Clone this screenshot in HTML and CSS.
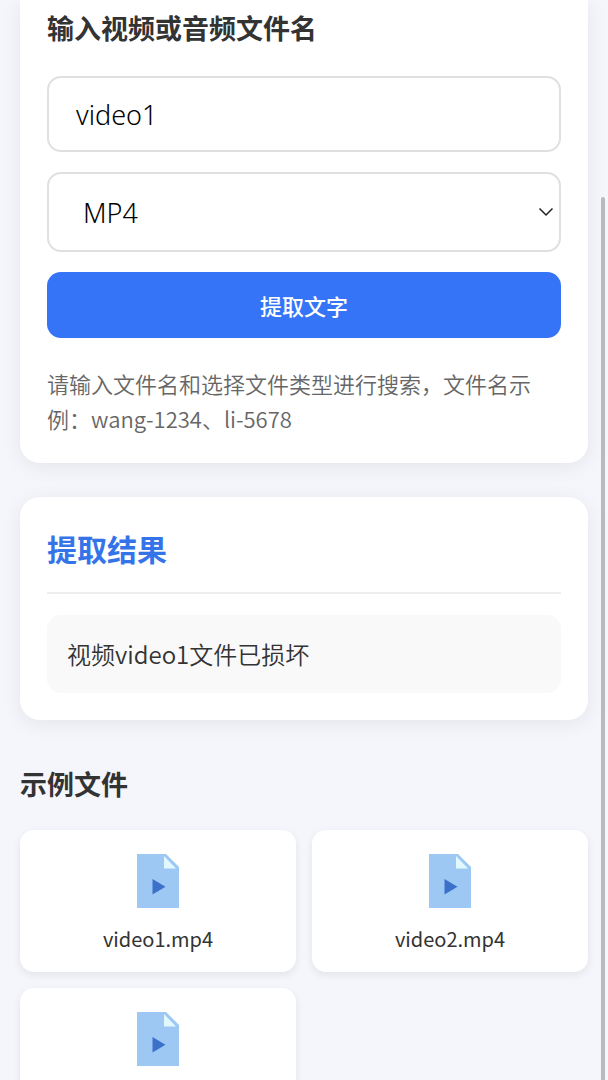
FILE: index.html
```html
<!DOCTYPE html>
<html lang="zh-CN">

<head>
    <meta charset="UTF-8">
    <meta name="viewport" content="width=device-width, initial-scale=1.0">
    <title>视频音频文字提取</title>
    <link rel="stylesheet" href="styles.css">
</head>

<body>
    <!-- 文件图标 -->
    <svg class="sprite" aria-hidden="true">
        <symbol id="icon-video" viewBox="0 0 42 54">
            <path d="M0 0h29l13 13v41H0z" fill="#9dc8f4" />
            <path d="M27 2v12.500h12z" fill="#e1f8fe" />
            <path d="M15.500 25v15.500L28.500 32.700z" fill="#3c71c9" />
        </symbol>
    </svg>

    <main class="container">
        <!-- 搜索区域 -->
        <form class="card search">
            <label class="search-title" for="filename">输入视频或音频文件名</label>
            <input class="field" type="text" id="filename" value="video1">
            <div class="select-box">
                <select class="field" id="filetype" aria-label="文件类型">
                    <option>MP4</option>
                    <option>MP3</option>
                </select>
                <svg class="select-arrow" viewBox="0 0 16 10" aria-hidden="true">
                    <path d="M1.500 1.500L8 8l6.500-6.500" fill="none" stroke="#222" stroke-width="1.500" />
                </svg>
            </div>
            <button class="btn" type="button">提取文字</button>
            <p class="hint">请输入文件名和选择文件类型进行搜索，文件名示例：wang-1234、li-5678</p>
        </form>

        <!-- 结果区域 -->
        <section class="card result">
            <h2 class="result-title">提取结果</h2>
            <div class="result-text">视频video1文件已损坏</div>
        </section>

        <!-- 示例文件 -->
        <section class="examples">
            <h3 class="examples-title">示例文件</h3>
            <ul class="file-list">
                <li class="file">
                    <svg class="file-icon" aria-hidden="true"><use href="#icon-video" /></svg>
                    <span>video1.mp4</span>
                </li>
                <li class="file">
                    <svg class="file-icon" aria-hidden="true"><use href="#icon-video" /></svg>
                    <span>video2.mp4</span>
                </li>
                <li class="file">
                    <svg class="file-icon" aria-hidden="true"><use href="#icon-video" /></svg>
                </li>
            </ul>
        </section>
    </main>
    <div class="scroll-thumb"></div>
</body>

</html>
```

FILE: styles.css
```css
* {
    margin: 0;
    padding: 0;
    box-sizing: border-box;
}

body {
    height: 100vh;
    overflow: hidden;
    background-color: #f4f6fb;
    color: #333;
    font-family: "Noto Sans CJK SC", sans-serif;
}

ul {
    list-style: none;
}

.sprite {
    position: absolute;
    width: 0;
    height: 0;
}

.container {
    padding: 0 20px;
}

.card {
    padding: 27px;
    background-color: #fff;
    border-radius: 20px;
    box-shadow: 0 4px 20px rgba(0, 0, 0, 0.07);
}

/* 搜索区域 */
.search {
    display: flex;
    flex-direction: column;
    gap: 20px;
    padding-top: 8px;
    border-radius: 0 0 20px 20px;
}

.search-title {
    margin-bottom: 8px;
    font-size: 27px;
    line-height: 40px;
    font-weight: 700;
}

.field {
    display: block;
    width: 100%;
    height: 76px;
    padding: 0 27px;
    border: 2px solid #e0e0e0;
    border-radius: 14px;
    background-color: #fff;
    color: #000;
    font-family: "Noto Sans", "Noto Sans CJK SC", sans-serif;
    font-size: 27px;
    font-weight: 300;
}

.select-box {
    position: relative;
}

select.field {
    height: 80px;
    padding: 0 34px;
    appearance: none;
}

.select-arrow {
    position: absolute;
    top: 50%;
    right: 7px;
    width: 16px;
    height: 10px;
    margin-top: -5px;
    pointer-events: none;
}

.btn {
    height: 66px;
    border: none;
    border-radius: 14px;
    background-color: #3574f7;
    color: #fff;
    font-family: inherit;
    font-size: 22px;
    font-weight: 500;
    cursor: pointer;
}

.hint {
    margin-top: 8px;
    color: #666;
    font-size: 22px;
    font-weight: 350;
    line-height: 35px;
}

/* 结果区域 */
.result {
    margin-top: 34px;
}

.result-title {
    margin-bottom: 21px;
    padding-bottom: 20px;
    border-bottom: 2px solid #eee;
    color: #3574e8;
    font-size: 30px;
    line-height: 48px;
}

.result-text {
    padding: 20px;
    border-radius: 14px;
    background-color: #f9f9f9;
    font-size: 24px;
    font-weight: 350;
    line-height: 38px;
}

/* 示例文件 */
.examples-title {
    margin: 44px 0 26px;
    font-size: 27px;
    line-height: 40px;
}

.file-list {
    display: grid;
    grid-template-columns: 1fr 1fr;
    gap: 16px;
}

.file {
    display: flex;
    flex-direction: column;
    align-items: center;
    gap: 14px;
    min-height: 142px;
    padding: 24px 16px 16px;
    border-radius: 14px;
    background-color: #fff;
    box-shadow: 0 3px 8px rgba(0, 0, 0, 0.08);
    font-size: 20px;
    line-height: 34px;
}

.file-icon {
    width: 42px;
    height: 54px;
}

/* 滚动条 */
.scroll-thumb {
    position: fixed;
    top: 197px;
    right: 3px;
    bottom: 0;
    width: 4px;
    border-radius: 2px 2px 0 0;
    background-color: #b8babf;
}
```
